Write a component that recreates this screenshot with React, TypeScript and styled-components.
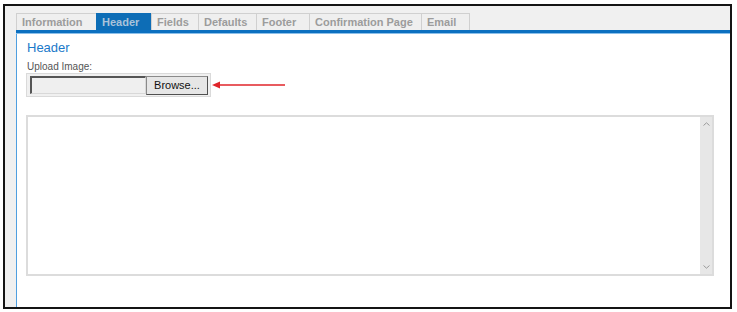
import React from "react";
import styled, { createGlobalStyle } from "styled-components";

const Global = createGlobalStyle`
  html, body { margin: 0; padding: 0; background: #ffffff; }
  body { font-family: "Liberation Sans", Arial, sans-serif; }
`;

const Frame = styled.div`
  box-sizing: border-box;
  margin: 4px 0 0 3px;
  width: 729px;
  height: 305px;
  border: 2px solid #141414;
  background: #f0f0f0;
  display: flex;
  flex-direction: column;
  padding: 7px 0 0 11px;
`;

const TabRow = styled.div`
  display: flex;
  height: 17px;
`;

const Tab = styled.div<{ $w: number; $active?: boolean }>`
  box-sizing: border-box;
  width: ${(p) => p.$w}px;
  height: 17px;
  border: 1px solid ${(p) => (p.$active ? "#0d6db6" : "#d0d0d0")};
  border-bottom: none;
  margin-right: -1px;
  background: ${(p) => (p.$active ? "#0d6db6" : "#efefef")};
  color: ${(p) => (p.$active ? "#a9c3da" : "#9c9c9c")};
  font-family: "Liberation Sans", Arial, sans-serif;
  font-weight: bold;
  font-size: 11px;
  line-height: 16px;
  padding-left: 5px;
  white-space: nowrap;
`;

const TabBar = styled.div`
  height: 3px;
  background: #0c70c0;
  border-bottom: 1px solid #8cc0ea;
`;

const Panel = styled.div`
  flex: 1;
  background: #ffffff;
  border-left: 1px solid #4f9fe0;
  padding: 6px 0 0 9px;
  display: flex;
  flex-direction: column;
`;

const Title = styled.div`
  font-family: "Liberation Sans", Arial, sans-serif;
  font-size: 13px;
  line-height: 15px;
  color: #1a79c9;
  padding-left: 1px;
`;

const Label = styled.div`
  margin-top: 6px;
  font-family: "Liberation Sans", Arial, sans-serif;
  font-size: 10px;
  line-height: 12px;
  color: #555555;
  padding-left: 1px;
`;

const UploadRow = styled.div`
  display: flex;
  align-items: center;
`;

const UploadBox = styled.div`
  box-sizing: border-box;
  width: 185px;
  height: 24px;
  border: 1px solid #dadada;
  background: #f0f0f0;
  display: flex;
  align-items: flex-start;
  padding: 2px 0 0 3px;
`;

const FileInput = styled.div`
  box-sizing: border-box;
  width: 116px;
  height: 18px;
  background: #efefef;
  border-top: 2px solid #555555;
  border-left: 2px solid #555555;
  border-right: 1px solid #d8d8d8;
  border-bottom: 1px solid #d8d8d8;
`;

const BrowseButton = styled.div`
  box-sizing: border-box;
  width: 62px;
  height: 19px;
  border: 1px solid #8a8a8a;
  border-right-color: #505050;
  border-bottom-color: #505050;
  background: #e6e6e6;
  font-family: "Liberation Sans", Arial, sans-serif;
  font-size: 11px;
  line-height: 17px;
  color: #111111;
  text-align: center;
`;

const Arrow = styled.svg`
  display: block;
  margin-left: 1px;
`;

const TextBox = styled.div`
  box-sizing: border-box;
  margin-top: 18px;
  width: 688px;
  height: 161px;
  border: 2px solid #dcdcdc;
  display: flex;
  justify-content: flex-end;
`;

const ScrollBar = styled.div`
  width: 12px;
  background: #e7e7e7;
  display: flex;
  flex-direction: column;
  justify-content: space-between;
  align-items: center;
  padding: 5px 0 5px;
`;

const Chevron = styled.svg`
  display: block;
`;

const tabs: { label: string; w: number; active?: boolean }[] = [
  { label: "Information", w: 81 },
  { label: "Header", w: 56, active: true },
  { label: "Fields", w: 48 },
  { label: "Defaults", w: 59 },
  { label: "Footer", w: 54 },
  { label: "Confirmation Page", w: 113 },
  { label: "Email", w: 49 },
];

export default function App() {
  return (
    <>
      <Global />
      <Frame>
        <TabRow>
          {tabs.map((t) => (
            <Tab key={t.label} $w={t.w} $active={t.active}>
              {t.label}
            </Tab>
          ))}
        </TabRow>
        <TabBar />
        <Panel>
          <Title>Header</Title>
          <Label>Upload Image:</Label>
          <UploadRow>
            <UploadBox>
              <FileInput />
              <BrowseButton>Browse...</BrowseButton>
            </UploadBox>
            <Arrow width="74" height="8" viewBox="0 0 74 8">
              <line x1="4" y1="4" x2="73" y2="4" stroke="#e0242a" strokeWidth="1.6" />
              <polygon points="0,4 8,0.5 8,7.5" fill="#e0242a" />
            </Arrow>
          </UploadRow>
          <TextBox>
            <ScrollBar>
              <Chevron width="7" height="4" viewBox="0 0 7 4">
                <polyline points="0.5,3.5 3.5,0.8 6.5,3.5" fill="none" stroke="#9a9a9a" strokeWidth="1" />
              </Chevron>
              <Chevron width="7" height="4" viewBox="0 0 7 4">
                <polyline points="0.5,0.5 3.5,3.2 6.5,0.5" fill="none" stroke="#9a9a9a" strokeWidth="1" />
              </Chevron>
            </ScrollBar>
          </TextBox>
        </Panel>
      </Frame>
    </>
  );
}
